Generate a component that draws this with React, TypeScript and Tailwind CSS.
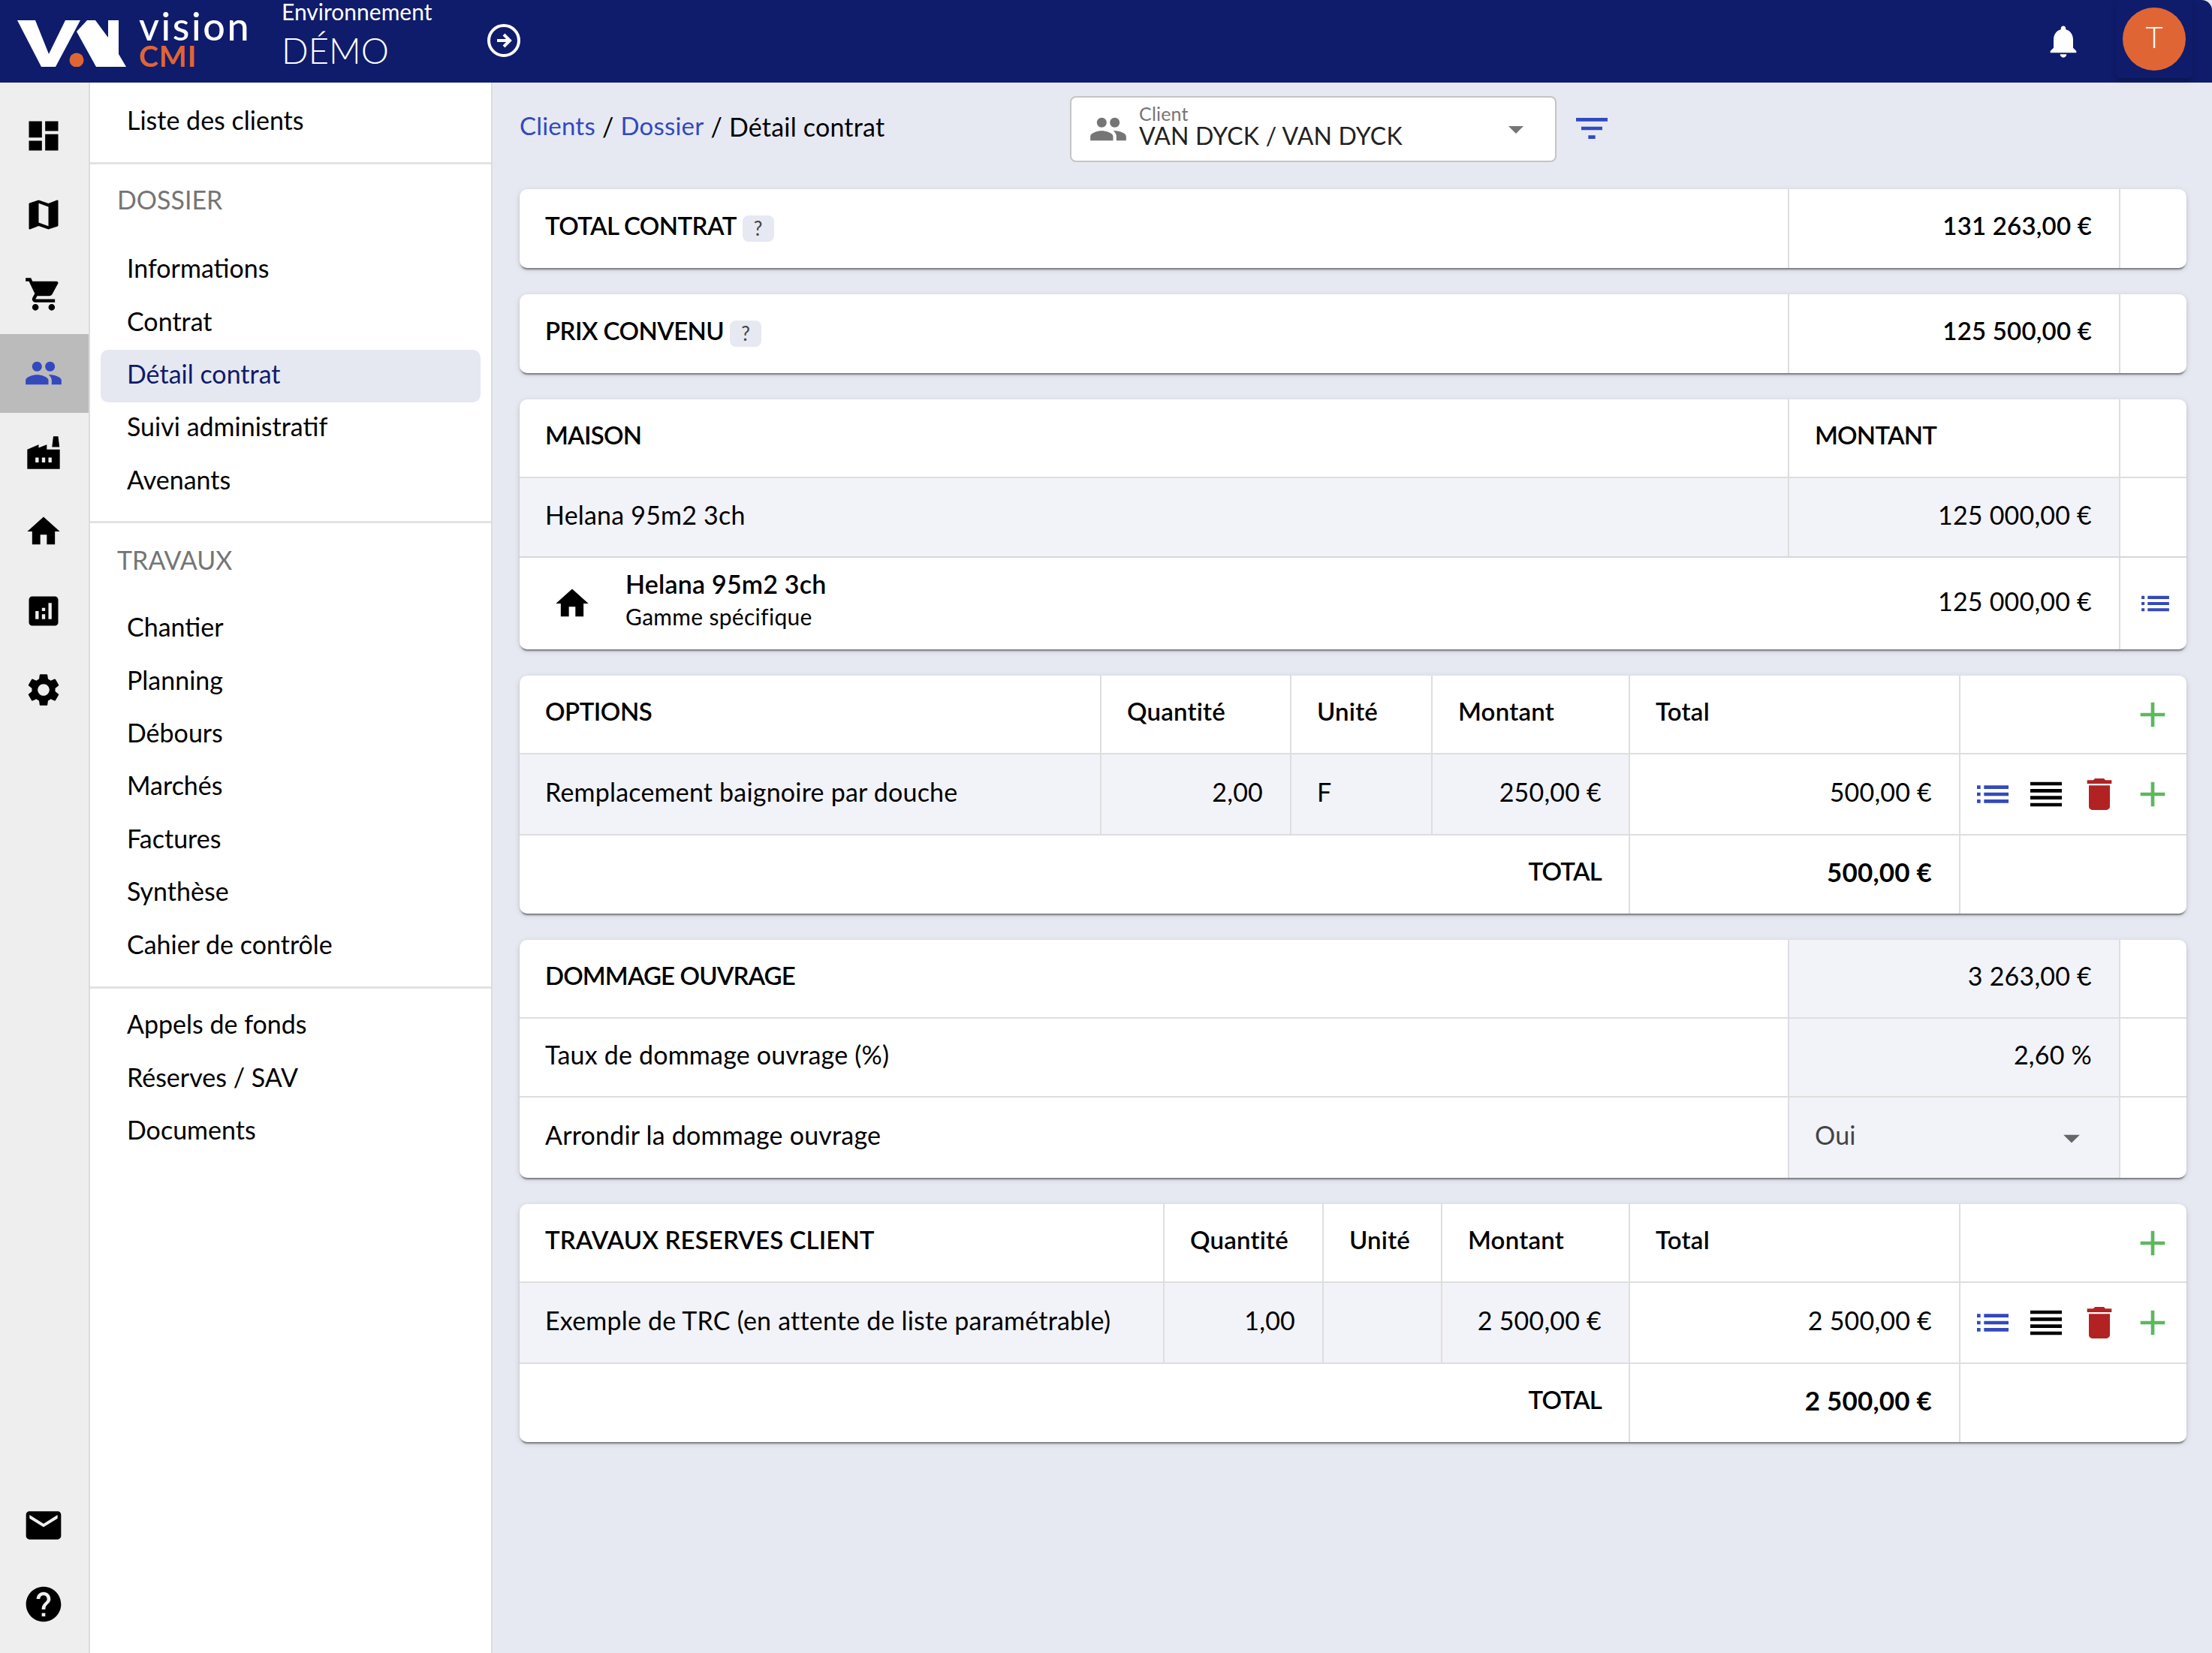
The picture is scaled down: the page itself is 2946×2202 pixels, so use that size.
import React from "react"

const font = "font-['Lato','Liberation_Sans',sans-serif]"

const paths = {
  dashboard: "M3 13h8V3H3v10zm0 8h8v-6H3v6zm10 0h8V11h-8v10zm0-18v6h8V3h-8z",
  map: "M20.5 3l-.16.03L15 5.1 9 3 3.36 4.9c-.21.07-.36.25-.36.48V20.5c0 .28.22.5.5.5l.16-.03L9 18.9l6 2.1 5.64-1.9c.21-.07.36-.25.36-.48V3.5c0-.28-.22-.5-.5-.5zM15 19l-6-2.11V5l6 2.11V19z",
  cart: "M7 18c-1.1 0-1.99.9-1.99 2S5.9 22 7 22s2-.9 2-2-.9-2-2-2zM1 2v2h2l3.6 7.59-1.35 2.45c-.16.28-.25.61-.25.96 0 1.1.9 2 2 2h12v-2H7.42c-.14 0-.25-.11-.25-.25l.03-.12.9-1.63h7.45c.75 0 1.41-.41 1.75-1.03l3.58-6.49c.08-.14.12-.31.12-.48 0-.55-.45-1-1-1H5.21l-.94-2H1zm16 16c-1.1 0-1.99.9-1.99 2s.89 2 1.99 2 2-.9 2-2-.9-2-2-2z",
  people: "M16 11c1.66 0 2.99-1.34 2.99-3S17.66 5 16 5c-1.66 0-3 1.34-3 3s1.34 3 3 3zm-8 0c1.66 0 2.99-1.34 2.99-3S9.66 5 8 5C6.34 5 5 6.34 5 8s1.34 3 3 3zm0 2c-2.33 0-7 1.17-7 3.5V19h14v-2.5c0-2.33-4.67-3.5-7-3.5zm8 0c-.29 0-.62.02-.97.05 1.16.84 1.97 1.97 1.97 3.45V19h6v-2.5c0-2.33-4.67-3.5-7-3.5z",
  factory: "M22 10v12H2V10l7-3v2l5-2v3h8zM17.2 8.5L18 2h3l.8 6.5h-4.6zM7 15v3h2v-3H7zm4 0v3h2v-3h-2zm4 0v3h2v-3h-2z",
  home: "M10 20v-6h4v6h5v-8h3L12 3 2 12h3v8z",
  analytics: "M19 3H5c-1.1 0-2 .9-2 2v14c0 1.1.9 2 2 2h14c1.1 0 2-.9 2-2V5c0-1.1-.9-2-2-2zM9 17H7v-5h2v5zm4 0h-2v-3h2v3zm0-5h-2v-2h2v2zm4 5h-2V7h2v10z",
  settings: "M19.14 12.94c.04-.3.06-.61.06-.94 0-.32-.02-.64-.07-.94l2.03-1.58c.18-.14.23-.41.12-.61l-1.92-3.32c-.12-.22-.37-.29-.59-.22l-2.39.96c-.5-.38-1.03-.7-1.62-.94L14.4 2.81c-.04-.24-.24-.41-.48-.41h-3.84c-.24 0-.43.17-.47.41L9.25 5.35C8.66 5.59 8.12 5.92 7.63 6.29L5.24 5.33c-.22-.08-.47 0-.59.22L2.74 8.87c-.12.21-.08.47.12.61l2.03 1.58c-.05.3-.09.63-.09.94s.02.64.07.94l-2.03 1.58c-.18.14-.23.41-.12.61l1.92 3.32c.12.22.37.29.59.22l2.39-.96c.5.38 1.03.7 1.62.94l.36 2.54c.05.24.24.41.48.41h3.84c.24 0 .44-.17.47-.41l.36-2.54c.59-.24 1.13-.56 1.62-.94l2.39.96c.22.08.47 0 .59-.22l1.92-3.32c.12-.22.07-.47-.12-.61l-2.01-1.58zM12 15.6c-1.98 0-3.6-1.62-3.6-3.6s1.62-3.6 3.6-3.6 3.6 1.62 3.6 3.6-1.62 3.6-3.6 3.6z",
  email: "M20 4H4c-1.1 0-1.99.9-1.99 2L2 18c0 1.1.9 2 2 2h16c1.1 0 2-.9 2-2V6c0-1.1-.9-2-2-2zm0 4l-8 5-8-5V6l8 5 8-5v2z",
  help: "M12 2C6.48 2 2 6.48 2 12s4.48 10 10 10 10-4.48 10-10S17.52 2 12 2zm1 17h-2v-2h2v2zm2.07-7.75l-.9.92C13.45 12.9 13 13.5 13 15h-2v-.5c0-1.1.45-2.1 1.17-2.83l1.24-1.26c.37-.36.59-.86.59-1.41 0-1.1-.9-2-2-2s-2 .9-2 2H8c0-2.21 1.79-4 4-4s4 1.79 4 4c0 .88-.36 1.68-.93 2.25z",
  bell: "M12 22c1.1 0 2-.9 2-2h-4c0 1.1.89 2 2 2zm6-6v-5c0-3.07-1.64-5.64-4.5-6.32V4c0-.83-.67-1.5-1.5-1.5s-1.5.67-1.5 1.5v.68C7.63 5.36 6 7.92 6 11v5l-2 2v1h16v-1l-2-2z",
  filter: "M10 18h4v-2h-4v2zM3 6v2h18V6H3zm3 7h12v-2H6v2z",
  list: "M3 13h2v-2H3v2zm0 4h2v-2H3v2zm0-8h2V7H3v2zm4 4h14v-2H7v2zm0 4h14v-2H7v2zM7 7v2h14V7H7z",
  reorder: "M3 15h18v-2H3v2zm0 4h18v-2H3v2zm0-8h18V9H3v2zm0-6v2h18V5H3z",
  trash: "M6 19c0 1.1.9 2 2 2h8c1.1 0 2-.9 2-2V7H6v12zM19 4h-3.5l-1-1h-5l-1 1H5v2h14V4z",
  add: "M19 13h-6v6h-2v-6H5v-2h6V5h2v6h6v2z",
  drop: "M7 10l5 5 5-5z",
}

type IconName = keyof typeof paths

const Icon = ({ name, className }: { name: IconName; className?: string }) => (
  <svg viewBox="0 0 24 24" fill="currentColor" fillRule="evenodd" className={className}>
    <path d={paths[name]} />
  </svg>
)

const railTop: IconName[] = ["dashboard", "map", "cart", "people", "factory", "home", "analytics", "settings"]

const Rail = () => (
  <div className="w-[120px] shrink-0 flex flex-col pt-[18px] pb-[12px] pr-[2px] bg-[#eeeeee] border-r-2 border-[#dcdcdc]">
    {railTop.map((name) => (
      <div
        key={name}
        className={`h-[105.5px] -mr-[2px] flex items-center justify-center ${name === "people" ? "bg-[#bbbbbb] text-[#3349bd]" : "text-black"}`}
      >
        <Icon name={name} className="w-[52px] h-[52px] -ml-[2px]" />
      </div>
    ))}
    <div className="mt-auto">
      <div className="h-[105.5px] flex items-center justify-center">
        <Icon name="email" className="w-[56px] h-[56px]" />
      </div>
      <div className="h-[105.5px] flex items-center justify-center">
        <Icon name="help" className="w-[56px] h-[56px]" />
      </div>
    </div>
  </div>
)

const NavItem = ({ label, active }: { label: string; active?: boolean }) => (
  <div
    className={`h-[70.4px] flex items-center pl-[35px] pb-[7px] text-[34px] rounded-[10px] ${active ? "bg-[#e6e8f1] text-[#0f1c6b]" : "text-black"}`}
  >
    {label}
  </div>
)

const NavTitle = ({ label }: { label: string }) => (
  <div className="h-[50px] flex items-center pl-[22px] text-[34px] text-[#757575]">{label}</div>
)

const Sidebar = () => (
  <div className="w-[536px] shrink-0 bg-white border-r-2 border-[#dcdcdc] flex flex-col">
    <div className="h-[109px] pt-[18px] px-[14px] border-b-[3px] border-[#e2e2e2] shrink-0">
      <NavItem label="Liste des clients" />
    </div>
    <div className="h-[478px] pt-[21px] px-[14px] border-b-[3px] border-[#e2e2e2] shrink-0">
      <NavTitle label="DOSSIER" />
      <div className="mt-[35px]">
        <NavItem label="Informations" />
        <NavItem label="Contrat" />
        <NavItem label="Détail contrat" active />
        <NavItem label="Suivi administratif" />
        <NavItem label="Avenants" />
      </div>
    </div>
    <div className="h-[620px] pt-[23px] px-[14px] border-b-[3px] border-[#e2e2e2] shrink-0">
      <NavTitle label="TRAVAUX" />
      <div className="mt-[33px]">
        {["Chantier", "Planning", "Débours", "Marchés", "Factures", "Synthèse", "Cahier de contrôle"].map((l) => (
          <NavItem key={l} label={l} />
        ))}
      </div>
    </div>
    <div className="pt-[15px] px-[14px]">
      {["Appels de fonds", "Réserves / SAV", "Documents"].map((l) => (
        <NavItem key={l} label={l} />
      ))}
    </div>
  </div>
)

const Header = () => (
  <div className="h-[110px] shrink-0 bg-[#0f1c6b] rounded-tr-[14px] flex items-center text-white relative">
    <div className="w-[375px] shrink-0 flex items-center pl-[22px]">
      <svg viewBox="0 0 146 62" className="w-[146px] h-[62px] mt-[6px] shrink-0">
        <path fill="#fff" d="M1 0h24l18 45L65 0h20L52 62H33z" />
        <path fill="#fff" d="M80 15L94 0h11l17 23V0h14v45l10 17H106z" />
        <circle cx="80" cy="53" r="9.5" fill="#e06535" />
      </svg>
      <div className="ml-[17px] flex flex-col mb-[9px]">
        <span className="text-[52px] leading-[46px] font-medium tracking-[2.6px]">vision</span>
        <span className="text-[39px] leading-[34px] font-bold tracking-[1px] text-[#e06535]">CMI</span>
      </div>
    </div>
    <div className="flex flex-col">
      <span className="text-[30px] leading-[30px] -mt-[16px]">Environnement</span>
      <span className="text-[47px] leading-[54px] mt-[10px] font-light">DÉMO</span>
    </div>
    <svg viewBox="0 0 24 24" fill="none" stroke="currentColor" strokeWidth="2" className="w-[48px] h-[48px] ml-[72px] -mt-[2px]">
      <circle cx="12" cy="12" r="10" />
      <path d="M7.5 12h8M12 8l4 4-4 4" />
    </svg>
    <div className="ml-auto flex items-center">
      <Icon name="bell" className="w-[52px] h-[52px] mr-[44px]" />
      <div className="w-[102px] h-[104px] mr-[26px] mb-[6px] flex items-center justify-center rounded-[6px] shadow-[0_3px_6px_rgba(0,0,0,0.25)]">
        <div className="w-[84px] h-[84px] rounded-full bg-[#e06535] flex items-center justify-center text-[40px] font-light pb-[6px]">T</div>
      </div>
    </div>
  </div>
)

const Card = ({ children }: { children: React.ReactNode }) => (
  <div className="bg-white rounded-[10px] overflow-hidden shadow-[0_4px_2px_-2px_rgba(0,0,0,0.35),0_2px_3px_0_rgba(0,0,0,0.14),0_2px_8px_0_rgba(0,0,0,0.12)]">
    {children}
  </div>
)

interface CellProps {
  children?: React.ReactNode
  right?: boolean
  alt?: boolean
  last?: boolean
  bold?: boolean
  actions?: boolean
}

const Cell = ({ children, right, alt, last, bold, actions }: CellProps) => (
  <div
    className={`flex items-center min-w-0 ${actions ? "justify-end pl-[22px] pr-[17px]" : "pl-[34px] pr-[36px] pb-[8px]"} ${right ? "justify-end" : ""} ${alt ? "bg-[#f2f3f8]" : ""} ${last ? "" : "border-r-2 border-[#dedede]"} ${bold ? "font-semibold text-[33px]" : ""}`}
  >
    {children}
  </div>
)

const QMark = () => (
  <span className="ml-[8px] mt-[8px] w-[42px] h-[35px] rounded-[8px] bg-[#e6e9f2] text-[#444] text-[26px] font-normal flex items-center justify-center">?</span>
)

const Actions = () => (
  <div className="flex items-center gap-[15px]">
    <Icon name="list" className="w-[56px] h-[56px] text-[#3349bd]" />
    <Icon name="reorder" className="w-[56px] h-[56px] text-black" />
    <Icon name="trash" className="w-[56px] h-[56px] text-[#b22222]" />
    <Icon name="add" className="w-[56px] h-[56px] text-[#5cb85c]" />
  </div>
)

const Plus = () => <Icon name="add" className="w-[56px] h-[56px] text-[#5cb85c]" />

const Single = ({ title, value }: { title: string; value: string }) => (
  <Card>
    <div className="grid grid-cols-[1691px_441px_1fr] h-[105px]">
      <Cell bold>
        <span className="tracking-[-0.6px]">{title}</span>
        <QMark />
      </Cell>
      <Cell right bold>{value}</Cell>
      <Cell last />
    </div>
  </Card>
)

const Maison = () => (
  <Card>
    <div className="grid grid-cols-[1691px_441px_1fr] h-[105px] border-b-2 border-[#dedede]">
      <Cell bold><span className="tracking-[-0.8px]">MAISON</span></Cell>
      <Cell bold><span className="tracking-[-0.8px]">MONTANT</span></Cell>
      <Cell last />
    </div>
    <div className="grid grid-cols-[1691px_441px_1fr] h-[106px] border-b-2 border-[#d6d7dc]">
      <Cell alt>Helana 95m2 3ch</Cell>
      <Cell alt right>125 000,00 €</Cell>
      <Cell last />
    </div>
    <div className="grid grid-cols-[2132px_1fr] h-[122px]">
      <Cell>
        <Icon name="home" className="w-[52px] h-[52px] mt-[8px] mr-[45px] ml-[10px]" />
        <div className="flex-1 flex flex-col">
          <span className="font-semibold leading-[42px]">Helana 95m2 3ch</span>
          <span className="text-[30px] leading-[44px] tracking-[0.3px]">Gamme spécifique</span>
        </div>
        <span>125 000,00 €</span>
      </Cell>
      <Cell last actions>
        <Icon name="list" className="w-[56px] h-[56px] text-[#3349bd]" />
      </Cell>
    </div>
  </Card>
)

interface LineTableProps {
  title: string
  titleClass: string
  cols: string
  totalCols: string
  name: string
  qty: string
  unit: string
  amount: string
  total: string
}

// same structure for the options table and the reserved works table
const LineTable = ({ title, titleClass, cols, totalCols, name, qty, unit, amount, total }: LineTableProps) => (
  <Card>
    <div className={`grid ${cols} h-[105px] border-b-2 border-[#dedede]`}>
      <Cell bold><span className={titleClass}>{title}</span></Cell>
      <Cell bold>Quantité</Cell>
      <Cell bold>Unité</Cell>
      <Cell bold>Montant</Cell>
      <Cell bold>Total</Cell>
      <Cell last actions><Plus /></Cell>
    </div>
    <div className={`grid ${cols} h-[108px] border-b-2 border-[#dedede]`}>
      <Cell alt>{name}</Cell>
      <Cell alt right>{qty}</Cell>
      <Cell alt>{unit}</Cell>
      <Cell alt right>{amount}</Cell>
      <Cell right>{total}</Cell>
      <Cell last actions><Actions /></Cell>
    </div>
    <div className={`grid ${totalCols} h-[104px]`}>
      <Cell right bold><span className="tracking-[-0.8px]">TOTAL</span></Cell>
      <Cell right bold><span className="text-[35px] font-bold">{total}</span></Cell>
      <Cell last />
    </div>
  </Card>
)

const Dommage = () => (
  <Card>
    <div className="grid grid-cols-[1691px_441px_1fr] h-[105px] border-b-2 border-[#dedede]">
      <Cell bold><span className="tracking-[-0.9px]">DOMMAGE OUVRAGE</span></Cell>
      <Cell alt right>3 263,00 €</Cell>
      <Cell last />
    </div>
    <div className="grid grid-cols-[1691px_441px_1fr] h-[105px] border-b-2 border-[#dedede]">
      <Cell>Taux de dommage ouvrage (%)</Cell>
      <Cell alt right>2,60 %</Cell>
      <Cell last />
    </div>
    <div className="grid grid-cols-[1691px_441px_1fr] h-[107px]">
      <Cell>Arrondir la dommage ouvrage</Cell>
      <Cell alt>
        <span className="flex-1 text-[#444]">Oui</span>
        <Icon name="drop" className="w-[52px] h-[52px] mt-[8px] text-[#666] mr-[1px]" />
      </Cell>
      <Cell last />
    </div>
  </Card>
)

const Main = () => (
  <div className="flex-1 min-w-0 bg-[#e6e9f2] pl-[36px] pr-[34px] text-black text-[34px] tracking-[0.2px]">
    <div className="h-[124px] mb-[18px] flex items-center">
      <div className="w-[733px] shrink-0 flex items-center gap-[9px] pb-[8px]">
        <span className="text-[33px] text-[#3349bd]">Clients</span>
        <span>/</span>
        <span className="text-[33px] text-[#3349bd]">Dossier</span>
        <span>/</span>
        <span>Détail contrat</span>
      </div>
      <div className="w-[648px] h-[88px] shrink-0 bg-white rounded-[8px] border-2 border-[#c4c4c4] flex items-center pl-[23px] pr-[28px]">
        <Icon name="people" className="w-[52px] h-[52px] text-[#757575]" />
        <div className="flex-1 ml-[15px] pb-[6px] flex flex-col">
          <span className="text-[25px] leading-[24px] text-[#757575]">Client</span>
          <span className="text-[32px] leading-[36px] text-[#222]">VAN DYCK / VAN DYCK</span>
        </div>
        <Icon name="drop" className="w-[48px] h-[48px] text-[#757575]" />
      </div>
      <Icon name="filter" className="w-[56px] h-[56px] ml-[19px] -mt-[2px] text-[#3349bd]" />
    </div>
    <div className="flex flex-col gap-[35px]">
      <Single title="TOTAL CONTRAT" value="131 263,00 €" />
      <Single title="PRIX CONVENU" value="125 500,00 €" />
      <Maison />
      <LineTable
        title="OPTIONS"
        titleClass="tracking-[-0.5px]"
        cols="grid-cols-[775px_253px_188px_263px_440px_1fr]"
        totalCols="grid-cols-[1479px_440px_1fr]"
        name="Remplacement baignoire par douche"
        qty="2,00"
        unit="F"
        amount="250,00 €"
        total="500,00 €"
      />
      <Dommage />
      <LineTable
        title="TRAVAUX RESERVES CLIENT"
        titleClass="tracking-[0.1px]"
        cols="grid-cols-[859px_212px_158px_250px_440px_1fr]"
        totalCols="grid-cols-[1479px_440px_1fr]"
        name="Exemple de TRC (en attente de liste paramétrable)"
        qty="1,00"
        unit=""
        amount="2 500,00 €"
        total="2 500,00 €"
      />
    </div>
  </div>
)

export default function App() {
  return (
    <div className={`h-screen flex flex-col overflow-hidden bg-[#e6e9f2] ${font}`}>
      <Header />
      <div className="flex-1 flex min-h-0">
        <Rail />
        <Sidebar />
        <Main />
      </div>
    </div>
  )
}
